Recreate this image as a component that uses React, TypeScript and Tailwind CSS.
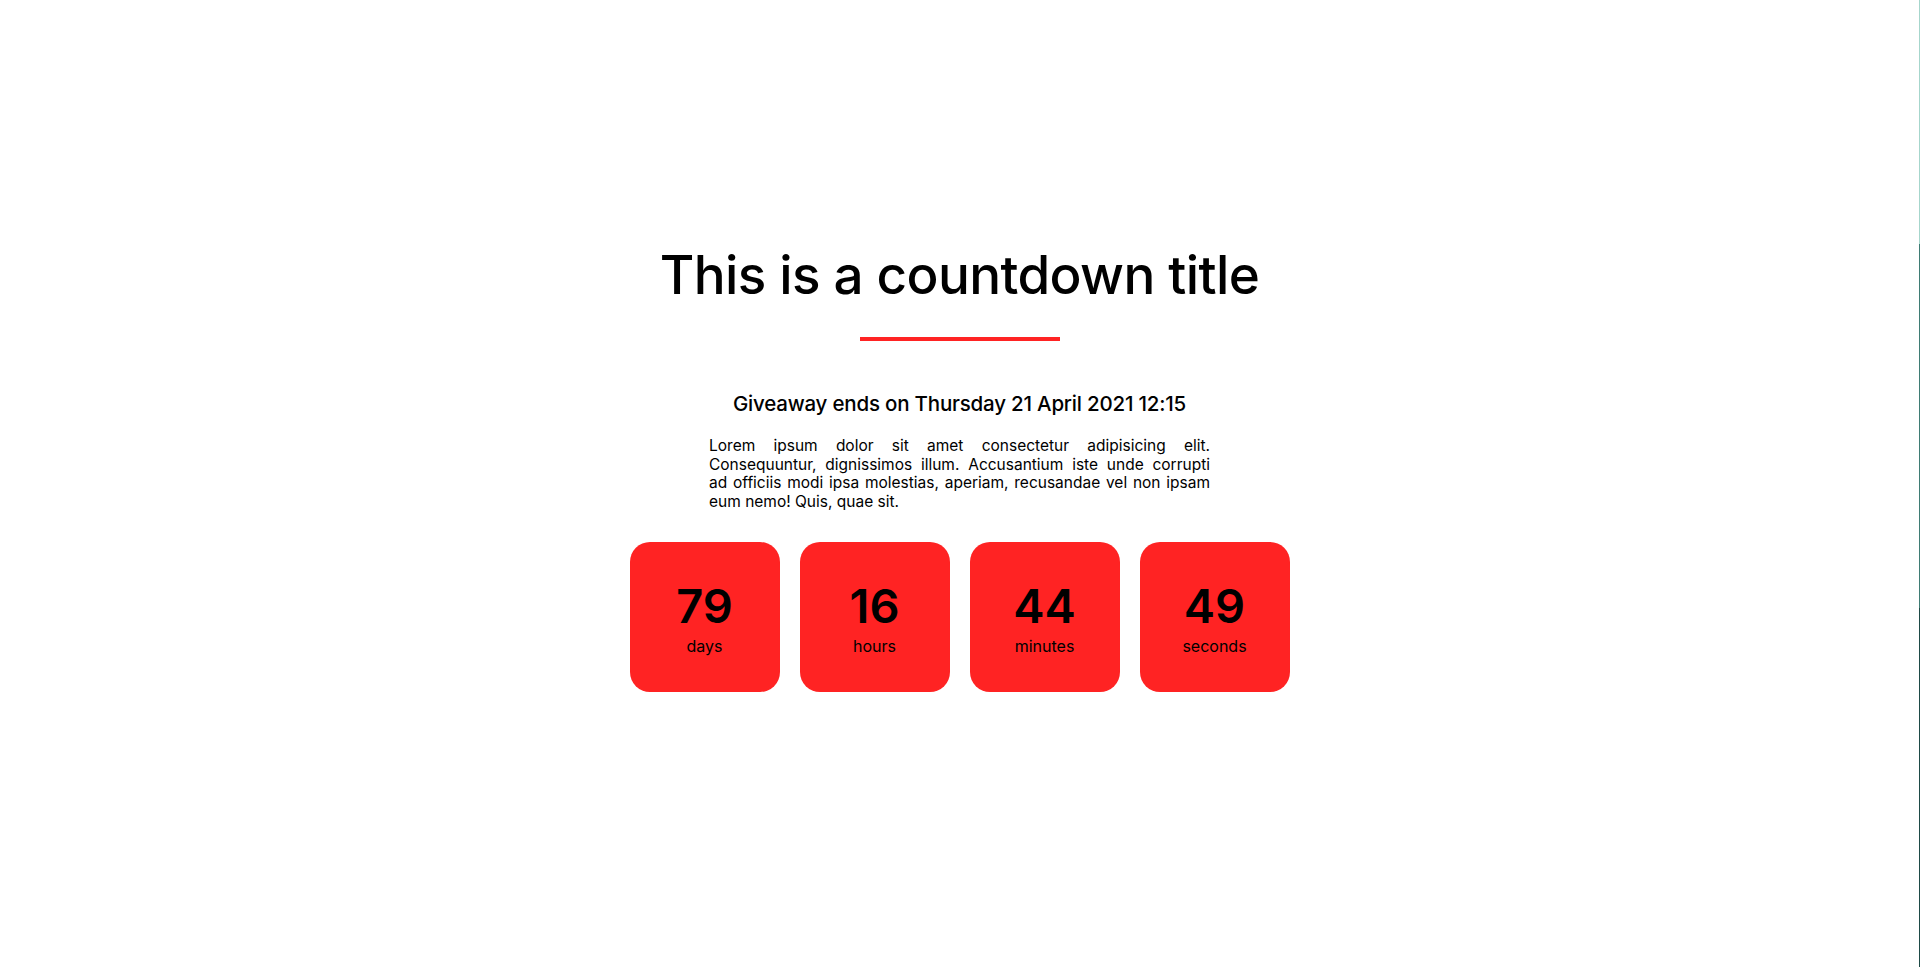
import React from "react";

const units = [
  { value: "79", label: "days" },
  { value: "16", label: "hours" },
  { value: "44", label: "minutes" },
  { value: "49", label: "seconds" },
];

const lines = [
  "Lorem ipsum dolor sit amet consectetur adipisicing elit.",
  "Consequuntur, dignissimos illum. Accusantium iste unde corrupti",
  "ad officiis modi ipsa molestias, aperiam, recusandae vel non ipsam",
];

export default function App() {
  return (
    <div className="flex h-[967px] w-full bg-white text-black font-['Inter','Noto_Sans',sans-serif] overflow-hidden">
      <main className="flex flex-1 flex-col items-center pt-[244px]">
        <h1 className="text-[53px] leading-[63px] font-medium tracking-[-0.6px]">
          This is a countdown title
        </h1>
        <div className="mt-[30px] h-[4px] w-[200px] bg-[#ff2323]" />
        <h2 className="mt-[51px] text-[20.5px] leading-[24px] font-medium tracking-[-0.2px]">
          Giveaway ends on Thursday 21 April 2021 12:15
        </h2>
        <div className="mt-[21px] w-[501px] text-[15.5px] leading-[18.67px]">
          {lines.map((l) => (
            <p key={l} className="whitespace-nowrap text-justify [text-align-last:justify]">
              {l}
            </p>
          ))}
          <p>eum nemo! Quis, quae sit.</p>
        </div>
        <div className="mt-[30px] flex gap-[20px]">
          {units.map((u) => (
            <div
              key={u.label}
              className="flex h-[150px] w-[150px] flex-col items-center rounded-[20px] bg-[#ff2323] pt-[40px]"
            >
              <div className="text-[47px] leading-[48px] font-semibold">{u.value}</div>
              <div className="mt-[6px] text-[16px] leading-[20px]">{u.label}</div>
            </div>
          ))}
        </div>
      </main>
      <div className="flex w-px flex-col">
        <div className="h-[244px] bg-[#a6d6cc]" />
        <div className="h-[364px] bg-[#3f7c74]" />
        <div className="flex-1 bg-[#1e4a46]" />
      </div>
    </div>
  );
}
